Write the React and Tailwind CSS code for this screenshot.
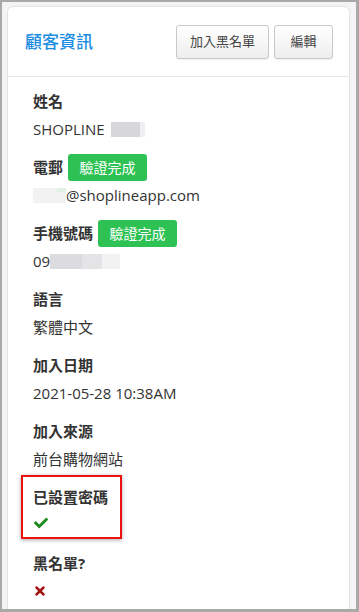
import React from "react";
import { FaCheck, FaTimes } from "react-icons/fa";

const font = { fontFamily: '"Open Sans", "Noto Sans CJK TC", sans-serif' };

function Label({ children }) {
  return (
    <div className="flex items-center h-[28px] text-[15px] font-bold text-[#333]">{children}</div>
  );
}
function Value({ children, h = "h-[28px]" }) {
  return <div className={`flex items-center ${h} text-[15px] text-[#333]`}>{children}</div>;
}
function Badge() {
  return (
    <span className="ml-[5px] inline-flex items-center justify-center h-[27px] w-[79px] rounded-[3px] bg-[#2ec254] text-white text-[14px] font-normal">
      驗證完成
    </span>
  );
}

export default function App() {
  return (
    <div
      style={font}
      className="w-[359px] h-[612px] overflow-hidden bg-[#f4f4f4] border-t-2 border-l-2 border-r-[3px] border-b-[3px] border-[#a9a9a9] pt-[4px] pl-[5px] pr-[6px]"
    >
      <div className="bg-white rounded-[6px] border border-[#e3e3e3] h-[700px]">
        <div className="flex items-center justify-between h-[70px] pl-[17px] pr-[16px] border-b border-[#e6e6e6]">
          <div className="text-[17px] font-medium text-[#1a8de3] mt-[1px]">顧客資訊</div>
          <div className="flex gap-[5px] mt-[1px]">
            <button className="h-[34px] w-[93px] rounded-[3px] border border-[#c8c8c8] bg-gradient-to-b from-white to-[#eeeeee] text-[13px] text-[#444] shadow-[0_1px_1px_rgba(0,0,0,0.06)]">
              加入黑名單
            </button>
            <button className="h-[34px] w-[59px] rounded-[3px] border border-[#c8c8c8] bg-gradient-to-b from-white to-[#eeeeee] text-[13px] text-[#444] shadow-[0_1px_1px_rgba(0,0,0,0.06)]">
              編輯
            </button>
          </div>
        </div>
        <div className="pl-[25px] pt-[10px] flex flex-col">
          <div>
            <Label>姓名</Label>
            <Value>
              SHOPLINE
              <span className="ml-[6px] inline-block h-[15px] w-[29px] bg-[#d6d6db]" />
              <span className="inline-block h-[15px] w-[5px] bg-[#f0f0f2]" />
            </Value>
          </div>
          <div className="mt-[10px]">
            <Label>
              電郵
              <Badge />
            </Label>
            <Value>
              <span className="inline-block h-[15px] w-[24px] bg-[#f2f2f2]" />
              <span className="inline-flex flex-col h-[15px] w-[9px]">
                <span className="h-[4px] bg-[#dff2e4]" />
                <span className="flex-1 bg-[#f2f2f2]" />
              </span>
              <span>@shoplineapp.com</span>
            </Value>
          </div>
          <div className="mt-[10px]">
            <Label>
              手機號碼
              <Badge />
            </Label>
            <Value>
              09
              <span className="inline-block h-[15px] w-[32px] bg-[#dcdce0]" />
              <span className="inline-block h-[15px] w-[20px] bg-[#e4e4e7]" />
              <span className="inline-block h-[15px] w-[18px] bg-[#f2f2f3]" />
            </Value>
          </div>
          <div className="mt-[10px]">
            <Label>語言</Label>
            <Value>繁體中文</Value>
          </div>
          <div className="mt-[10px]">
            <Label>加入日期</Label>
            <Value>2021-05-28 10:38AM</Value>
          </div>
          <div className="mt-[10px]">
            <Label>加入來源</Label>
            <Value>前台購物網站</Value>
          </div>
          <div className="mt-[2px] -ml-[12px] w-[101px] border-2 border-[#ee1111] pl-[10px] pt-[6px] shadow-[0_1px_4px_rgba(0,0,0,0.35)]">
            <Label>已設置密碼</Label>
            <Value h="h-[26px]">
              <FaCheck className="text-[#1a8a1a] w-[14px] h-[14px] ml-[1px] -mt-[2px]" />
            </Value>
          </div>
          <div className="mt-[10px]">
            <Label>黑名單?</Label>
            <Value>
              <FaTimes className="text-[#a10f0f] w-[14px] h-[14px] ml-[0px]" />
            </Value>
          </div>
        </div>
      </div>
    </div>
  );
}
